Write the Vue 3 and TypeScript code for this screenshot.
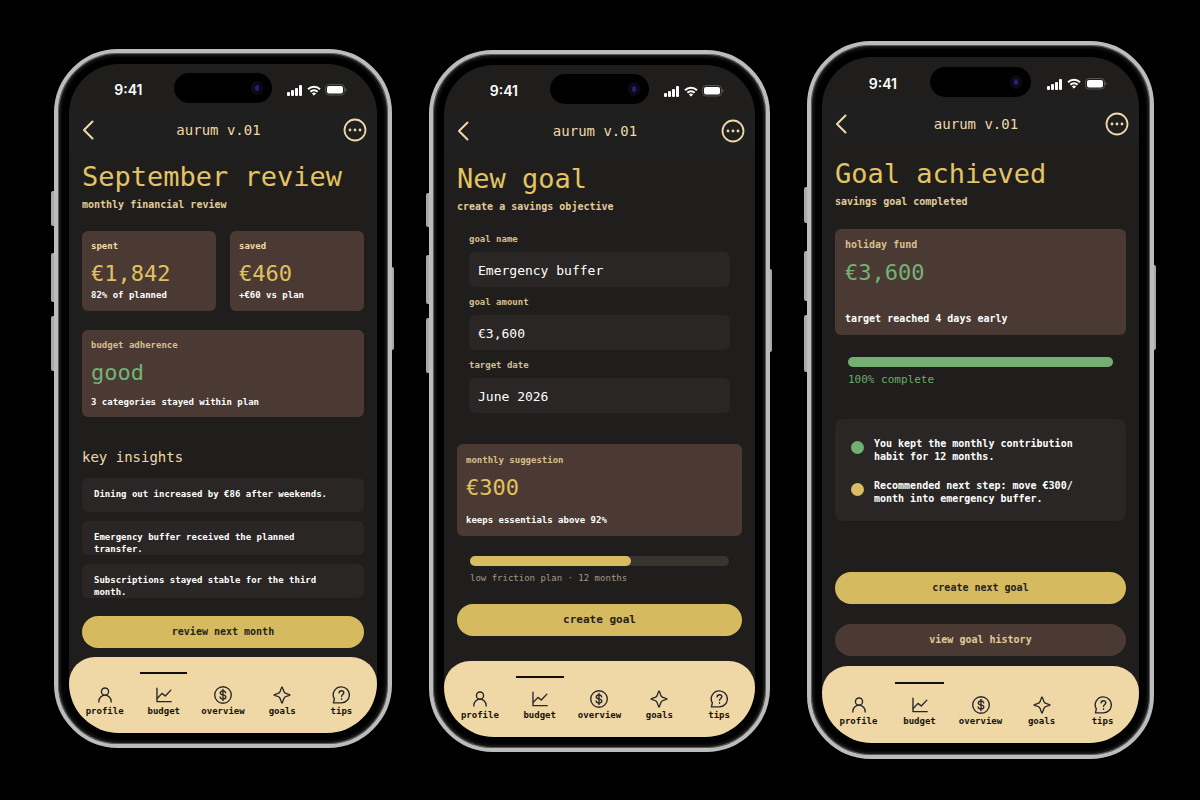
<script setup lang="ts">
type ScreenId = 'review' | 'goal' | 'achieved'

interface Phone {
  id: ScreenId
  title: string
  subtitle: string
}

interface Tab {
  id: string
  label: string
  paths: string[]
}

interface Field {
  id: string
  label: string
  value: string
}

const phones: Phone[] = [
  { id: 'review', title: 'September review', subtitle: 'monthly financial review' },
  { id: 'goal', title: 'New goal', subtitle: 'create a savings objective' },
  { id: 'achieved', title: 'Goal achieved', subtitle: 'savings goal completed' },
]

const tabs: Tab[] = [
  {
    id: 'profile',
    label: 'profile',
    paths: ['M10 2.2a4 4 0 1 0 0 8a4 4 0 1 0 0-8', 'M3.2 17.8v-1a6.8 6.6 0 0 1 13.6 0v1'],
  },
  { id: 'budget', label: 'budget', paths: ['M2.2 2.4v15h15.8', 'M2.6 13.6l5.2-5.4 3.600 3 6.200-6.600'] },
  {
    id: 'overview',
    label: 'overview',
    paths: [
      'M10 .8a9.2 9.2 0 1 0 0 18.4a9.2 9.2 0 1 0 0-18.4',
      'M13 7.6c-.3-1.4-1.4-2.1-3-2.1-1.8 0-3 .8-3 2.2 0 3.2 6.1 1.3 6.1 4.6 0 1.4-1.3 2.2-3.1 2.2s-3-.8-3.2-2.3',
      'M10 3.8v12.4',
    ],
  },
  {
    id: 'goals',
    label: 'goals',
    paths: ['M10 1c.9 0 1.2 5 3 6.600 1.500 1.400 6 1.500 6 2.400s-4.500 1-6 2.400c-1.800 1.600-2.100 6.600-3 6.600s-1.200-5-3-6.600c-1.500-1.400-6-1.500-6-2.400s4.500-1 6-2.400c1.800-1.600 2.100-6.600 3-6.600z'],
  },
  {
    id: 'tips',
    label: 'tips',
    paths: [
      'M10.4 1a8.900 8.900 0 1 1 0 17.800H1.600l1-4.400A8.900 8.900 0 0 1 10.400 1z',
      'M7.900 7.700c.1-1.500 1.200-2.400 2.600-2.400s2.600.9 2.600 2.300c0 1.900-2.500 2-2.500 4',
      'M10.600 14.200v.6',
    ],
  },
]

const insights: string[] = [
  'Dining out increased by €86 after weekends.',
  'Emergency buffer received the planned transfer.',
  'Subscriptions stayed stable for the third month.',
]

const fields: Field[] = [
  { id: 'goal-name', label: 'goal name', value: 'Emergency buffer' },
  { id: 'goal-amount', label: 'goal amount', value: '€3,600' },
  { id: 'target-date', label: 'target date', value: 'June 2026' },
]

const progress = 62
</script>

<template>
  <div class="stage">
    <article v-for="phone in phones" :key="phone.id" class="phone" :class="phone.id">
      <span class="key key-a"></span>
      <span class="key key-b"></span>
      <span class="key key-c"></span>
      <span class="key key-d"></span>
      <div class="screen">
        <div class="status">
          <span class="time">9:41</span>
          <span class="island"><span class="camera"></span></span>
          <span class="signals">
            <svg width="16" height="12" viewBox="0 0 16 12" fill="#fff" aria-hidden="true">
              <rect x="0" y="8" width="3" height="4" rx="1" />
              <rect x="4" y="6" width="3" height="6" rx="1" />
              <rect x="8" y="4" width="3" height="8" rx="1" />
              <rect x="12" y="1" width="3" height="11" rx="1" />
            </svg>
            <svg width="14" height="11" viewBox="0 0 14 11" fill="none" stroke="#fff" stroke-width="2" aria-hidden="true">
              <path d="M1 4.200a8.600 8.600 0 0 1 12 0" />
              <path d="M3.400 6.800a5.200 5.200 0 0 1 7.200 0" />
              <path d="M5.400 8.600a2.400 2.400 0 0 1 3.200 0L7 10.200z" fill="#fff" stroke-width="1" />
            </svg>
            <svg width="22" height="12" viewBox="0 0 22 12" aria-hidden="true">
              <rect x=".5" y=".5" width="19" height="10.500" rx="3.500" fill="none" stroke="#545351" />
              <rect x="2" y="2" width="16" height="7.500" rx="2" fill="#fff" />
              <path d="M20.500 4v3.600a2 2 0 0 0 0-3.600z" fill="#6c6b69" />
            </svg>
          </span>
        </div>

        <header class="bar">
          <button type="button" class="icon-button" aria-label="Back">
            <svg width="12" height="20" viewBox="0 0 12 20" fill="none" stroke="currentColor" stroke-width="2" stroke-linecap="round" stroke-linejoin="round">
              <path d="M10.500 1.500L2 10l8.500 8.500" />
            </svg>
          </button>
          <span class="brand">aurum v.01</span>
          <button type="button" class="icon-button" aria-label="More">
            <svg width="24" height="24" viewBox="0 0 24 24" fill="none" stroke="currentColor" stroke-width="1.800">
              <circle cx="12" cy="12" r="10.500" />
              <g fill="currentColor" stroke="none">
                <circle cx="7" cy="12" r="1.400" />
                <circle cx="12" cy="12" r="1.400" />
                <circle cx="17" cy="12" r="1.400" />
              </g>
            </svg>
          </button>
        </header>

        <main class="body">
          <h1>{{ phone.title }}</h1>
          <p class="subtitle">{{ phone.subtitle }}</p>

          <template v-if="phone.id === 'review'">
            <div class="pair">
              <section class="card">
                <p class="label strong">spent</p>
                <p class="value">€1,842</p>
                <p class="note">82% of planned</p>
              </section>
              <section class="card">
                <p class="label strong">saved</p>
                <p class="value">€460</p>
                <p class="note">+€60 vs plan</p>
              </section>
            </div>
            <section class="card adherence">
              <p class="label">budget adherence</p>
              <p class="value green">good</p>
              <p class="note">3 categories stayed within plan</p>
            </section>
            <h2>key insights</h2>
            <ul class="insights">
              <li v-for="text in insights" :key="text">{{ text }}</li>
            </ul>
            <button type="button" class="action">review next month</button>
          </template>

          <template v-else-if="phone.id === 'goal'">
            <form class="form" @submit.prevent>
              <div v-for="field in fields" :key="field.id" class="field">
                <label :for="field.id">{{ field.label }}</label>
                <input :id="field.id" type="text" :value="field.value" />
              </div>
            </form>
            <section class="card suggestion">
              <p class="label">monthly suggestion</p>
              <p class="value">€300</p>
              <p class="note">keeps essentials above 92%</p>
            </section>
            <div class="progress">
              <div class="track"><div class="fill" :style="{ width: progress + '%' }"></div></div>
              <p class="caption">low friction plan · 12 months</p>
            </div>
            <button type="button" class="action large">create goal</button>
          </template>

          <template v-else>
            <section class="card fund">
              <p class="label">holiday fund</p>
              <p class="value green">€3,600</p>
              <p class="note">target reached 4 days early</p>
            </section>
            <div class="progress complete">
              <div class="track"><div class="fill"></div></div>
              <p class="caption">100% complete</p>
            </div>
            <ul class="milestones">
              <li><span class="dot"></span><span>You kept the monthly contribution habit for 12 months.</span></li>
              <li><span class="dot gold"></span><span>Recommended next step: move €300/<wbr />month into emergency buffer.</span></li>
            </ul>
            <div class="actions">
              <button type="button" class="action">create next goal</button>
              <button type="button" class="action muted">view goal history</button>
            </div>
          </template>
        </main>

        <nav class="tabs" aria-label="Sections">
          <a v-for="tab in tabs" :key="tab.id" :href="'#' + tab.id" class="tab" :class="{ active: tab.id === 'budget' }">
            <svg width="18" height="18" viewBox="0 0 20 20" fill="none" stroke="#26262b" stroke-width="1.500" stroke-linecap="round" stroke-linejoin="round" aria-hidden="true">
              <path v-for="d in tab.paths" :key="d" :d="d" />
            </svg>
            <span>{{ tab.label }}</span>
          </a>
        </nav>
      </div>
    </article>
  </div>
</template>

<style>
body {
  margin: 0;
  background: #000;
}
</style>

<style scoped>
.stage {
  display: grid;
  grid-template-columns: 338fr 341fr 347fr;
  align-items: start;
  column-gap: 37px;
  min-height: 100vh;
  padding: 41px 46px 40px 54px;
  box-sizing: border-box;
  background: #000;
  font-family: "DejaVu Sans Mono", "Liberation Mono", monospace;
  color: #fff;
}

.phone {
  position: relative;
  box-sizing: border-box;
  padding: 11px;
  border: 4px solid #bcbcbc;
  border-radius: 64px;
  background: #000;
  box-shadow: inset 0 0 0 1px #5b5b5b, inset 0 0 3px 3px #1c1c1c;
}

.review {
  margin-top: 8px;
}

.goal {
  margin-top: 9px;
}

.achieved {
  padding: 12px 11px;
}

.key {
  position: absolute;
  left: -7px;
  width: 3px;
  border-radius: 2px 0 0 2px;
  background: #a9a9a9;
}

.key-a {
  top: 20%;
  height: 5%;
}

.key-b {
  top: 29%;
  height: 7%;
}

.key-c {
  top: 38%;
  height: 8%;
}

.key-d {
  top: 31%;
  right: -6px;
  left: auto;
  width: 2px;
  height: 12%;
  border-radius: 0 2px 2px 0;
}

.screen {
  overflow: hidden;
  border-radius: 50px;
  background: #1f1e1c;
}

.status {
  display: grid;
  grid-template-columns: 1fr 32% 1fr;
  align-items: center;
  height: 48px;
}

.achieved .status {
  height: 49px;
}

.time {
  padding: 4px 0 0 14px;
  font: 600 14px/18px Inter, sans-serif;
  text-align: center;
}

.island {
  display: flex;
  align-items: center;
  justify-content: flex-end;
  height: 30px;
  padding-right: 9px;
  border-radius: 15px;
  background: #000;
}

.camera {
  width: 4px;
  height: 6px;
  border: 4px solid #0c0a16;
  border-radius: 50%;
  background: #20237a;
}

.signals {
  display: flex;
  align-items: center;
  justify-content: center;
  gap: 4px;
  padding: 4px 16px 0 0;
}

.bar {
  display: flex;
  align-items: center;
  justify-content: space-between;
  height: 36px;
  padding: 0 10px 0 13px;
  background: #1f1f1f;
  color: #f0d9a6;
}

.brand {
  font-size: 14px;
  line-height: 18px;
}

.icon-button {
  display: flex;
  padding: 0;
  border: 0;
  background: none;
  color: inherit;
}

.body {
  display: flex;
  flex-direction: column;
  padding: 13px 13px 9px;
}

.goal .body {
  padding: 14px 13px 25px;
}

.achieved .body {
  padding: 16px 13px 10px;
}

h1,
h2,
p,
ul {
  margin: 0;
  padding: 0;
  font-weight: 400;
  list-style: none;
}

h1 {
  font-size: 27px;
  line-height: 32px;
  color: #e3c464;
  white-space: nowrap;
}

.subtitle {
  margin-top: 5px;
  font-size: 10px;
  font-weight: 700;
  line-height: 14px;
  color: #e2cb9a;
}

.card {
  padding: 9px;
  border-radius: 6px;
  background: #4a3a33;
}

.label,
.note,
.field label {
  font-size: 9px;
  font-weight: 700;
  line-height: 12px;
}

.label,
.field label {
  color: #d9bf8e;
}

.label.strong {
  color: #f2dba8;
}

.value {
  margin-top: 9px;
  font-size: 22px;
  line-height: 26px;
  color: #e0c162;
}

.green {
  color: #74b375;
}

.pair {
  display: grid;
  grid-template-columns: 1fr 1fr;
  gap: 14px;
  margin-top: 19px;
}

.pair .card {
  padding-bottom: 10px;
}

.pair .note {
  margin-top: 2px;
}

.adherence {
  margin-top: 19px;
}

.adherence .note {
  margin-top: 10px;
}

h2 {
  margin-top: 31px;
  font-size: 14px;
  line-height: 18px;
  color: #f0d9a6;
}

.insights {
  display: flex;
  flex-direction: column;
  gap: 9px;
  margin: 12px 0 18px;
}

.insights li {
  min-height: 24px;
  padding: 10px 24px 0 12px;
  border-radius: 6px;
  background: #292625;
  font-size: 9px;
  font-weight: 700;
  line-height: 12px;
}

.action {
  height: 32px;
  padding: 0 16px;
  border: 0;
  border-radius: 16px;
  background: #d6ba60;
  color: #26221a;
  font: 700 10px/14px "DejaVu Sans Mono", "Liberation Mono", monospace;
}

.action.large {
  font-size: 11px;
}

.action.muted {
  background: #4a3a33;
  color: #e2c999;
}

.form {
  display: flex;
  flex-direction: column;
  gap: 9px;
  margin-top: 19px;
  padding: 0 12px;
}

.field {
  display: flex;
  flex-direction: column;
  gap: 7px;
}

.field input {
  box-sizing: border-box;
  width: 100%;
  height: 35px;
  padding: 2px 9px 0;
  border: 0;
  border-radius: 6px;
  background: #292625;
  color: #fff;
  font: 400 13px/18px "DejaVu Sans Mono", "Liberation Mono", monospace;
}

.suggestion {
  margin-top: 31px;
  padding: 10px 9px;
}

.suggestion .note {
  margin-top: 13px;
}

.progress {
  margin: 20px 0;
  padding: 0 13px;
}

.track {
  height: 10px;
  border-radius: 5px;
  background: #37352f;
}

.fill {
  height: 100%;
  border-radius: 5px;
  background: #d9bc61;
}

.caption {
  margin-top: 6px;
  font-size: 9px;
  line-height: 12px;
  color: #a59a83;
}

.fund {
  margin-top: 20px;
  padding: 10px;
}

.fund .note {
  margin-top: 27px;
}

.fund .label,
.fund .note {
  font-size: 10px;
}

.complete {
  margin: 22px 0 32px;
}

.complete .fill {
  background: #74af72;
}

.complete .caption {
  font-size: 11px;
  line-height: 14px;
  color: #6eaa6d;
}

.milestones {
  display: flex;
  flex-direction: column;
  gap: 16px;
  padding: 18px 32px 16px 16px;
  border-radius: 8px;
  background: #292625;
  font-size: 10px;
  line-height: 13px;
}

.milestones li {
  display: flex;
  gap: 10px;
  font-weight: 700;
}

.dot {
  flex: none;
  width: 13px;
  height: 13px;
  margin-top: 4px;
  border-radius: 50%;
  background: #74af72;
}

.dot.gold {
  background: #dabd62;
}

.actions {
  display: flex;
  flex-direction: column;
  gap: 20px;
  margin-top: 51px;
}

.tabs {
  display: grid;
  grid-template-columns: repeat(5, 1fr);
  padding: 15px 6px 16px;
  border-radius: 26px 26px 0 0;
  background: #efd7a6;
}

.achieved .tabs {
  padding-top: 16px;
}

.tab {
  display: flex;
  flex-direction: column;
  align-items: center;
  gap: 1px;
  margin: 0 6px;
  padding-top: 12px;
  border-top: 2px solid transparent;
  color: #15130f;
  font-size: 9px;
  font-weight: 700;
  line-height: 12px;
  text-decoration: none;
}

.tab.active {
  border-top-color: #100f0d;
}
</style>
